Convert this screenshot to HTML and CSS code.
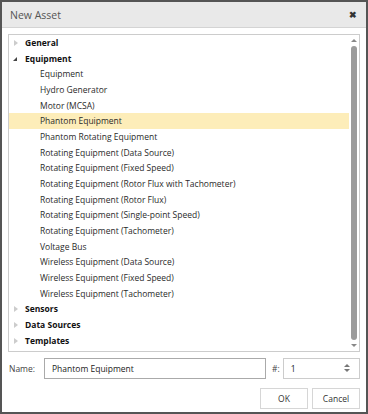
FILE: index.html
```html
<!DOCTYPE html>
<html lang="en">
<head>
  <meta charset="UTF-8" />
  <title>New Asset</title>
  <link rel="stylesheet" href="styles.css">
</head>
<body>
  <div class="dialog">
    <div class="titlebar">
      <span class="title">New Asset</span>
      <span class="close">&#10006;</span>
    </div>

    <div class="content">
      <div class="tree">
        <div class="tree-list">
          <div class="node cat"><span class="tri closed"></span>General</div>
          <div class="node cat"><span class="tri open"></span>Equipment</div>
          <div class="node leaf">Equipment</div>
          <div class="node leaf">Hydro Generator</div>
          <div class="node leaf">Motor (MCSA)</div>
          <div class="node leaf selected">Phantom Equipment</div>
          <div class="node leaf">Phantom Rotating Equipment</div>
          <div class="node leaf">Rotating Equipment (Data Source)</div>
          <div class="node leaf">Rotating Equipment (Fixed Speed)</div>
          <div class="node leaf">Rotating Equipment (Rotor Flux with Tachometer)</div>
          <div class="node leaf">Rotating Equipment (Rotor Flux)</div>
          <div class="node leaf">Rotating Equipment (Single-point Speed)</div>
          <div class="node leaf">Rotating Equipment (Tachometer)</div>
          <div class="node leaf">Voltage Bus</div>
          <div class="node leaf">Wireless Equipment (Data Source)</div>
          <div class="node leaf">Wireless Equipment (Fixed Speed)</div>
          <div class="node leaf">Wireless Equipment (Tachometer)</div>
          <div class="node cat"><span class="tri closed"></span>Sensors</div>
          <div class="node cat"><span class="tri closed"></span>Data Sources</div>
          <div class="node cat"><span class="tri closed"></span>Templates</div>
        </div>
        <div class="scrollbar">
          <span class="arrow up"></span>
          <div class="thumb"></div>
          <span class="arrow down"></span>
        </div>
      </div>

      <div class="fields">
        <label class="lbl">Name:</label>
        <div class="input name-input">Phantom Equipment</div>
        <label class="lbl hash">#:</label>
        <div class="input count-input">
          <span>1</span>
          <span class="spin">
            <span class="arrow up"></span>
            <span class="arrow down"></span>
          </span>
        </div>
      </div>

      <div class="buttons">
        <button class="btn ok">OK</button>
        <button class="btn">Cancel</button>
      </div>
    </div>
  </div>
</body>
</html>
```

FILE: styles.css
```css
html, body {
  margin: 0;
  padding: 0;
}

body {
  font-family: "Open Sans", "Liberation Sans", sans-serif;
  font-size: 8.5px;
  color: #222;
  background: #fff;
}

.dialog {
  width: 368px;
  height: 414px;
  box-sizing: border-box;
  border: 2px solid #555;
  background: #fff;
  display: flex;
  flex-direction: column;
}

.titlebar {
  height: 25px;
  background: #e9e9e9;
  border-bottom: 1px solid #d4d4d4;
  display: flex;
  align-items: center;
  justify-content: space-between;
  padding: 0 9px 0 8px;
}

.title {
  font-size: 10.5px;
  color: #555;
}

.close {
  font-size: 9px;
  font-weight: bold;
  color: #333;
}

.content {
  flex: 1;
  padding: 6px 6px 0 6px;
  display: flex;
  flex-direction: column;
}

.tree {
  height: 318px;
  box-sizing: border-box;
  border: 1px solid #ccc;
  display: flex;
}

.tree-list {
  flex: 1;
}

.node {
  height: 15.68px;
  line-height: 15.68px;
  white-space: nowrap;
}

.cat {
  font-weight: bold;
  color: #111;
  padding-left: 16px;
  position: relative;
}

.leaf {
  padding-left: 31px;
  color: #2a2a2a;
}

.selected {
  background: #fdedb9;
}

.tri {
  position: absolute;
  left: 5px;
  top: 5px;
  width: 0;
  height: 0;
}

.tri.closed {
  border-top: 3px solid transparent;
  border-bottom: 3px solid transparent;
  border-left: 4px solid #ccc;
}

.tri.open {
  left: 4px;
  top: 6px;
  border-left: 4px solid transparent;
  border-bottom: 4px solid #444;
}

.scrollbar {
  width: 10px;
  display: flex;
  flex-direction: column;
  align-items: center;
  padding: 4px 0;
}

.arrow {
  width: 0;
  height: 0;
  border-left: 3px solid transparent;
  border-right: 3px solid transparent;
}

.arrow.up {
  border-bottom: 3px solid #888;
}

.arrow.down {
  border-top: 3px solid #888;
}

.thumb {
  flex: 1;
  width: 6px;
  margin: 4px 0;
  background: #9b9b9b;
  border-radius: 3px;
}

.fields {
  display: flex;
  align-items: center;
  margin-top: 4px;
  height: 24px;
}

.lbl {
  color: #444;
  width: 36px;
  padding-left: 1px;
  box-sizing: border-box;
}

.hash {
  width: auto;
  padding: 0 3px 0 6px;
}

.input {
  height: 21px;
  line-height: 19px;
  border: 1px solid #ccc;
  box-sizing: border-box;
  padding: 0 7px;
  color: #222;
}

.name-input {
  width: 222px;
  border-color: #aaa;
}

.count-input {
  flex: 1;
  display: flex;
  justify-content: space-between;
  align-items: center;
}

.spin {
  display: flex;
  flex-direction: column;
  gap: 2px;
  margin-right: 2px;
}

.spin .arrow.up {
  border-bottom-color: #777;
}

.spin .arrow.down {
  border-top-color: #777;
}

.buttons {
  display: flex;
  justify-content: flex-end;
  gap: 4px;
  margin-top: 8px;
}

.btn {
  font-family: "Open Sans", "Liberation Sans", sans-serif;
  font-size: 8.5px;
  color: #333;
  background: #fff;
  border: 1px solid #d6d6d6;
  height: 21px;
  padding: 0;
  width: 48px;
}
```
